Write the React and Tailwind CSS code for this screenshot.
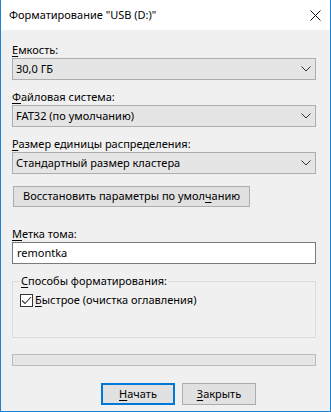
const Chevron = () => (
  <svg width="10" height="6" viewBox="0 0 10 6" className="shrink-0">
    <polyline points="0.5,0.5 5,5 9.5,0.5" fill="none" stroke="#333" strokeWidth="1" />
  </svg>
);

const Select = ({ value }) => (
  <div className="h-[22px] w-[304px] bg-[#e5e5e5] border border-[#adadad] flex items-center justify-between pl-[3px] pr-[4px]">
    <span>{value}</span>
    <Chevron />
  </div>
);

const Label = ({ first, rest }) => (
  <div className="h-[17px] leading-[17px]">
    <u className="underline-offset-2">{first}</u>
    {rest}
  </div>
);

export default function App() {
  return (
    <div
      className="w-[331px] h-[412px] bg-[#f0f0f0] border-x border-b border-[#1883d7] flex flex-col text-[11px] text-black"
      style={{ fontFamily: '"Noto Sans", "Open Sans", sans-serif' }}
    >
      <div className="h-[30px] bg-white flex items-center justify-between pl-[8px] pr-[9px] shrink-0">
        <span className="text-[11px]">Форматирование "USB (D:)"</span>
        <svg width="11" height="11" viewBox="0 0 11 11">
          <path d="M0.5 0.5 L10.5 10.5 M10.5 0.5 L0.5 10.5" stroke="#111" strokeWidth="1" />
        </svg>
      </div>

      <div className="pl-[11px] pt-[11px] flex flex-col">
        <Label first="Е" rest="мкость:" />
        <Select value="30,0 ГБ" />
        <div className="mt-[8px]">
          <Label first="Ф" rest="айловая система:" />
        </div>
        <Select value="FAT32 (по умолчанию)" />
        <div className="mt-[8px]">
          <Label first="Р" rest="азмер единицы распределения:" />
        </div>
        <Select value="Стандартный размер кластера" />

        <button className="mt-[12px] ml-[1px] h-[21px] w-[237px] bg-[#e1e1e1] border border-[#adadad] flex items-center justify-center whitespace-nowrap">
          <span>
            Восстановить параметры по умол<u className="underline-offset-2">ч</u>анию
          </span>
        </button>

        <div className="mt-[18px]">
          <Label first="М" rest="етка тома:" />
        </div>
        <div className="h-[22px] w-[304px] bg-white border border-[#7a7a7a] flex items-center pl-[4px]">
          remontka
        </div>

        <fieldset className="mt-[9px] w-[304px] h-[65px] border border-[#dcdcdc] pl-[7px]">
          <legend className="px-[1px] leading-[16px]">
            <u className="underline-offset-2">С</u>пособы форматирования:
          </legend>
          <div className="flex items-center mt-[3px]">
            <div className="w-[13px] h-[13px] border border-[#333] bg-white flex items-center justify-center">
              <svg width="11" height="11" viewBox="0 0 11 11">
                <polyline points="1,5.5 4,8.5 10,2" fill="none" stroke="#333" strokeWidth="1.1" />
              </svg>
            </div>
            <span className="ml-[2px]">
              <u className="underline-offset-2">Б</u>ыстрое (очистка оглавления)
            </span>
          </div>
        </fieldset>

        <div className="mt-[16px] w-[304px] h-[12px] bg-[#e6e6e6] border border-[#bcbcbc]" />

        <div className="mt-[17px] flex gap-[7px] ml-[89px]">
          <button className="w-[74px] h-[22px] bg-[#e1e1e1] border-2 border-[#0078d7] flex items-center justify-center">
            <span>
              <u className="underline-offset-2">Н</u>ачать
            </span>
          </button>
          <button className="w-[74px] h-[22px] bg-[#e1e1e1] border border-[#adadad] flex items-center justify-center">
            <span>
              <u className="underline-offset-2">З</u>акрыть
            </span>
          </button>
        </div>
      </div>
    </div>
  );
}
